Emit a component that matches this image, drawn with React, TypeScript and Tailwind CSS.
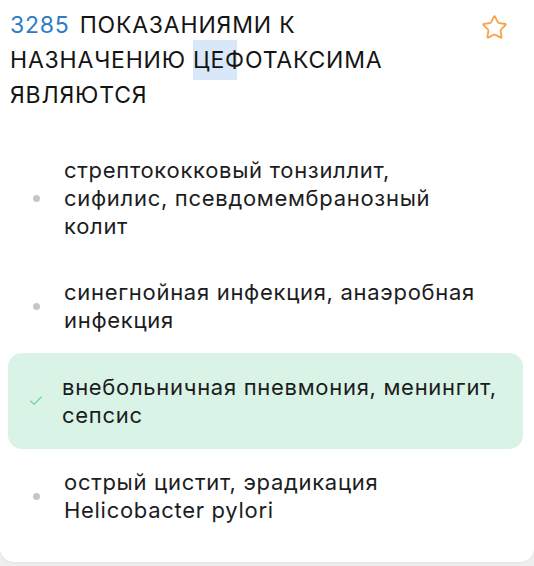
import { Star, Check } from 'lucide-react';

type Option = { id: number; text: string; correct?: boolean };

const OPTIONS: Option[] = [
  { id: 1, text: 'стрептококковый тонзиллит, сифилис, псевдомембранозный колит' },
  { id: 2, text: 'синегнойная инфекция, анаэробная инфекция' },
  { id: 3, text: 'внебольничная пневмония, менингит, сепсис', correct: true },
  { id: 4, text: 'острый цистит, эрадикация Helicobacter pylori' },
];

function OptionRow({ option }: { option: Option }) {
  if (option.correct) {
    return (
      <div className="ml-[8px] mr-[11px] flex items-center rounded-[14px] bg-[#d9f3e6] py-[20px] pl-[19px]">
        <div className="flex w-[18px] justify-center">
          <Check size={16} strokeWidth={1.6} className="text-[#5fd39c]" />
        </div>
        <p className="ml-[17px] w-[455px] text-[22px] leading-[28px] tracking-[0.7px] text-[#1c1c1e]">{option.text}</p>
      </div>
    );
  }
  return (
    <div className="flex items-center py-[19px] pl-[27px]">
      <div className="flex w-[18px] justify-center">
        <span className="size-[7px] rounded-full bg-[#c6c6c8]" />
      </div>
      <p className="ml-[19px] w-[425px] text-[22px] leading-[28px] tracking-[0.7px] text-[#1c1c1e]">{option.text}</p>
    </div>
  );
}

export default function App() {
  return (
    <div className="min-h-screen bg-[#efeff0] font-['Inter',sans-serif]">
      <div className="rounded-b-[14px] bg-white pb-[19px] shadow-[0_1px_3px_rgba(0,0,0,0.06)]">
        {/* Question header */}
        <div className="flex items-start justify-between pl-[10px] pr-[26px] pt-[8px]">
          <h1 className="max-w-[440px] text-[23px] leading-[35px] tracking-[0.8px] text-[#141414]">
            <span className="mr-[10px] text-[#2e7dc3]">3285</span>
            ПОКАЗАНИЯМИ К НАЗНАЧЕНИЮ{' '}
            <span className="bg-[linear-gradient(to_right,#d8e8f8_84%,transparent_84%)] py-[6px]">ЦЕФ</span>
            ОТАКСИМА ЯВЛЯЮТСЯ
          </h1>
          <Star size={27} strokeWidth={1.6} className="mt-[6px] text-[#f5a54c]" />
        </div>

        {/* Answer options */}
        <div className="mt-[24px] flex flex-col">
          {OPTIONS.map((o) => (
            <OptionRow key={o.id} option={o} />
          ))}
        </div>
      </div>
    </div>
  );
}
